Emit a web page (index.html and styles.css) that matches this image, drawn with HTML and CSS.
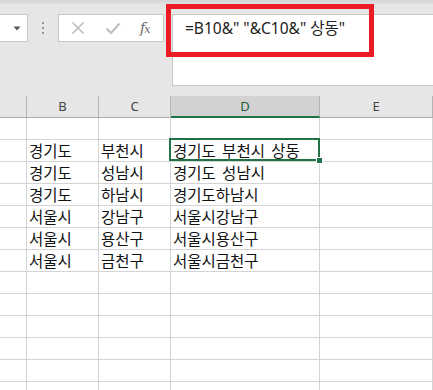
FILE: index.html
```html
<!DOCTYPE html>
<html lang="ko">
<head>
<meta charset="utf-8">
<link rel="stylesheet" href="styles.css">
</head>
<body>
<div class="app">
  <div class="topband"></div>
  <div class="fbar">
    <div class="namebox">
      <svg class="arrow" width="8" height="5" viewBox="0 0 8 5"><path d="M0.5 0.5 H7.5 L4 4.5 Z" fill="#555"/></svg>
    </div>
    <div class="grip"><span></span><span></span><span></span></div>
    <div class="btns">
      <svg class="btn" width="14" height="14" viewBox="0 0 14 14"><path d="M1.5 1.5 L12.5 12.5 M12.5 1.5 L1.5 12.5" stroke="#bdbdbd" stroke-width="1.6" fill="none"/></svg>
      <svg class="btn" width="16" height="14" viewBox="0 0 16 14"><path d="M1.5 7.5 L6 12 L14.5 2.5" stroke="#bdbdbd" stroke-width="2" fill="none"/></svg>
      <span class="fx"><i>f</i><i class="x">x</i></span>
    </div>
    <div class="formula">=B10&amp;" "&amp;C10&amp;" 상동"</div>
  </div>
  <div class="sheet">
    <div class="hd"></div><div class="hd">B</div><div class="hd">C</div><div class="hd sel">D</div><div class="hd">E</div>

    <div class="c"></div><div class="c"></div><div class="c"></div><div class="c"></div><div class="c"></div>

    <div class="c"></div><div class="c">경기도</div><div class="c">부천시</div><div class="c active">경기도 부천시 상동</div><div class="c"></div>
    <div class="c"></div><div class="c">경기도</div><div class="c">성남시</div><div class="c">경기도 성남시</div><div class="c"></div>
    <div class="c"></div><div class="c">경기도</div><div class="c">하남시</div><div class="c">경기도하남시</div><div class="c"></div>
    <div class="c"></div><div class="c">서울시</div><div class="c">강남구</div><div class="c">서울시강남구</div><div class="c"></div>
    <div class="c"></div><div class="c">서울시</div><div class="c">용산구</div><div class="c">서울시용산구</div><div class="c"></div>
    <div class="c"></div><div class="c">서울시</div><div class="c">금천구</div><div class="c">서울시금천구</div><div class="c"></div>

    <div class="c"></div><div class="c"></div><div class="c"></div><div class="c"></div><div class="c"></div>
    <div class="c"></div><div class="c"></div><div class="c"></div><div class="c"></div><div class="c"></div>
    <div class="c"></div><div class="c"></div><div class="c"></div><div class="c"></div><div class="c"></div>
    <div class="c"></div><div class="c"></div><div class="c"></div><div class="c"></div><div class="c"></div>
    <div class="c"></div><div class="c"></div><div class="c"></div><div class="c"></div><div class="c"></div>
    <div class="c"></div><div class="c"></div><div class="c"></div><div class="c"></div><div class="c"></div>
    <div class="c"></div><div class="c"></div><div class="c"></div><div class="c"></div><div class="c"></div>
  </div>
  <div class="highlight"></div>
</div>
</body>
</html>
```
FILE: styles.css
```css
html, body {
  margin: 0;
  padding: 0;
  background: #e6e6e6;
}
body {
  width: 433px;
  height: 390px;
  overflow: hidden;
}
.app {
  position: relative;
  width: 433px;
  height: 390px;
  overflow: hidden;
  background: #e6e6e6;
  font-family: "Noto Sans", "Noto Sans CJK KR", sans-serif;
}
.topband {
  height: 4px;
  background: linear-gradient(#d6d6d6, #dedede);
}
.fbar {
  display: flex;
  align-items: flex-start;
  padding-top: 10px;
  height: 72px;
  margin-bottom: 10px;
}
.namebox {
  box-sizing: border-box;
  width: 28px;
  height: 28px;
  background: #fff;
  border: 1px solid #c6c6c6;
  border-left: none;
  display: flex;
  align-items: center;
  justify-content: flex-end;
  padding-right: 6px;
}
.arrow { display: block; }
.grip {
  width: 30px;
  height: 28px;
  display: flex;
  flex-direction: column;
  align-items: center;
  justify-content: center;
  gap: 3px;
}
.grip span {
  width: 2px;
  height: 2px;
  background: #9a9a9a;
}
.btns {
  box-sizing: border-box;
  width: 106px;
  height: 28px;
  background: #fff;
  border: 1px solid #c6c6c6;
  display: flex;
  align-items: center;
  padding-left: 12px;
  gap: 0;
}
.btn { display: block; }
.btns .btn:first-child { margin-right: 20px; }
.btns .btn:nth-child(2) { margin-right: 19px; }
.fx {
  font-family: "DejaVu Serif", "Liberation Serif", serif;
  font-size: 14px;
  color: #666;
  letter-spacing: -1px;
}
.fx i { font-style: italic; }
.fx .x { font-size: 11px; }
.formula {
  box-sizing: border-box;
  flex: 1;
  margin-left: 8px;
  height: 72px;
  background: #fff;
  border: 1px solid #c6c6c6;
  border-right: none;
  padding: 3px 0 0 12px;
  font-size: 15.5px;
  line-height: 20px;
  color: #222;
  white-space: nowrap;
}
.sheet {
  display: grid;
  grid-template-columns: 27px 72px 72px 149px 1fr;
  grid-auto-rows: 22px;
  background: #fff;
}
.hd {
  box-sizing: border-box;
  background: #e6e6e6;
  border-right: 1px solid #b4b4b4;
  border-bottom: 1px solid #ababab;
  font-family: "Noto Sans", sans-serif;
  font-size: 13px;
  line-height: 21px;
  text-align: center;
  color: #444;
}
.hd.sel {
  background: #d2d2d2;
  color: #1e5f3a;
  border-bottom: 2px solid #217346;
  line-height: 20px;
}
.c {
  box-sizing: border-box;
  border-right: 1px solid #d4d4d4;
  border-bottom: 1px solid #d4d4d4;
  font-family: "Noto Sans CJK KR", "Noto Sans", sans-serif;
  font-size: 15.5px;
  line-height: 20px;
  padding-left: 2px;
  color: #111;
  white-space: nowrap;
  word-spacing: 2px;
  overflow: visible;
}
.c.active {
  position: relative;
}
.c.active::after {
  content: "";
  position: absolute;
  left: -2px;
  top: -2px;
  right: -1px;
  bottom: 0;
  border: 2px solid #217346;
}
.c.active::before {
  content: "";
  position: absolute;
  right: -4px;
  bottom: -3px;
  width: 5px;
  height: 5px;
  background: #217346;
  border: 1px solid #fff;
  z-index: 2;
}
.highlight {
  position: absolute;
  left: 166px;
  top: 4px;
  width: 208px;
  height: 53px;
  box-sizing: border-box;
  border: 5px solid #ec1c24;
}
```
